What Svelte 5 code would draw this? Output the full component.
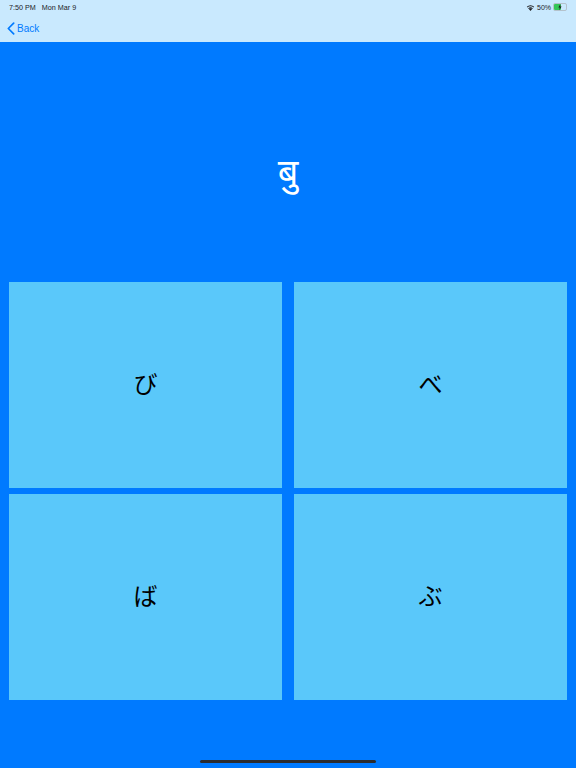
<script>
	const choices = ['び', 'べ', 'ば', 'ぶ'];
</script>

<div class="page">
	<header class="top">
		<div class="status">
			<div class="clock">
				<span>7:50 PM</span>
				<span>Mon Mar 9</span>
			</div>
			<div class="system">
				<svg class="wifi" viewBox="0 0 12 9" width="9" height="7" aria-hidden="true">
					<path d="M6 9 3.9 6.6a3 3 0 0 1 4.2 0Z" fill="#1c1c1e" />
					<path d="M2.9 5.5a4.5 4.5 0 0 1 6.2 0l-.8.9a3.4 3.4 0 0 0-4.6 0Z" fill="#1c1c1e" />
					<path d="M1.1 3.6a7 7 0 0 1 9.8 0l-.8.9a5.8 5.8 0 0 0-8.2 0Z" fill="#1c1c1e" />
				</svg>
				<span class="percent">50%</span>
				<div class="battery">
					<div class="level" style="width: 55%"></div>
					<svg class="bolt" viewBox="0 0 4 6" width="4" height="6" aria-hidden="true">
						<path d="M2.4 0 .4 3.4h1.3L1.4 6l2.2-3.6H2.2Z" fill="#1c1c1e" />
					</svg>
				</div>
			</div>
		</div>
		<nav class="nav">
			<button class="back">
				<svg viewBox="0 0 9 14" width="8" height="13" aria-hidden="true">
					<path d="M7.5 1 1.5 7l6 6" fill="none" stroke="#007aff" stroke-width="1.9" stroke-linecap="round" stroke-linejoin="round" />
				</svg>
				Back
			</button>
		</nav>
	</header>

	<main class="quiz">
		<div class="prompt" lang="hi">बु</div>
		<div class="choices">
			{#each choices as choice}
				<button class="choice" lang="ja">{choice}</button>
			{/each}
		</div>
	</main>

	<div class="home"></div>
</div>

<style>
	:global(body) {
		margin: 0;
	}

	.page {
		height: 768px;
		width: 576px;
		display: flex;
		flex-direction: column;
		position: relative;
		overflow: hidden;
		background: #007aff;
		font-family: "Liberation Sans", sans-serif;
	}

	.top {
		height: 42px;
		background: #c9e9fe;
		flex-shrink: 0;
	}

	.status {
		height: 14px;
		display: flex;
		justify-content: space-between;
		align-items: center;
		padding: 0 9px;
		font-size: 7.2px;
		color: #1c1c1e;
	}

	.clock {
		display: flex;
		gap: 6px;
	}

	.system {
		display: flex;
		align-items: center;
		gap: 2px;
	}

	.percent {
		font-size: 7px;
	}

	.battery {
		position: relative;
		width: 12px;
		height: 6px;
		border: 1px solid #b4c2cc;
		border-radius: 2px;
	}

	.level {
		height: 100%;
		background: #34c759;
		border-radius: 1px;
	}

	.bolt {
		position: absolute;
		left: 4px;
		top: 0;
	}

	.nav {
		height: 28px;
		display: flex;
		align-items: center;
		padding-left: 7px;
	}

	.back {
		display: flex;
		align-items: center;
		gap: 2px;
		padding: 0;
		border: 0;
		background: none;
		font: inherit;
		font-size: 10px;
		color: #007aff;
	}

	.quiz {
		flex: 1;
		display: flex;
		flex-direction: column;
		padding: 0 9px 68px;
	}

	.prompt {
		height: 222px;
		padding-top: 18px;
		display: flex;
		align-items: center;
		justify-content: center;
		color: #fff;
		font-family: "Noto Sans", "DejaVu Sans", "Noto Sans CJK JP", sans-serif;
		font-size: 36px;
	}

	.choices {
		flex: 1;
		display: grid;
		grid-template-columns: 1fr 1fr;
		grid-template-rows: 1fr 1fr;
		column-gap: 12px;
		row-gap: 6px;
	}

	.choice {
		border: 0;
		padding: 0 0 6px;
		background: #5ac8fa;
		color: #000;
		font-family: "Noto Sans CJK JP", sans-serif;
		font-size: 24px;
	}

	.home {
		position: absolute;
		left: 200px;
		bottom: 5px;
		width: 176px;
		height: 3px;
		border-radius: 2px;
		background: #2c2c2e;
	}
</style>
